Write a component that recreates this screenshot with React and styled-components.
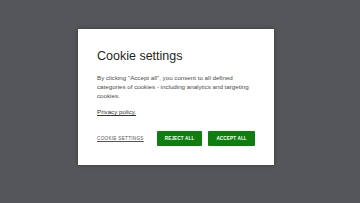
import React from "react";
import styled, { createGlobalStyle } from "styled-components";

const GlobalStyle = createGlobalStyle`
  html, body {
    margin: 0;
    padding: 0;
    width: 100%;
    height: 100%;
    background: #54565a;
    font-family: "Liberation Sans", Arial, sans-serif;
  }
  #root {
    height: 100%;
  }
`;

const Overlay = styled.div`
  width: 100vw;
  height: 100vh;
  display: flex;
  align-items: center;
  justify-content: center;
  padding: 0 8px 9px 0;
  box-sizing: border-box;
  background-color: #54565a;
`;

const Modal = styled.div`
  width: 196px;
  box-sizing: border-box;
  padding: 20px 19px 19px;
  background: #ffffff;
  box-shadow: 0 0 4px rgba(0, 0, 0, 0.35);
  display: flex;
  flex-direction: column;
`;

const Title = styled.h2`
  margin: 0;
  font-size: 12.5px;
  line-height: 15px;
  font-weight: 400;
  color: #1f1f1f;
`;

const Body = styled.p`
  margin: 9px 0 0;
  font-size: 6.2px;
  line-height: 9px;
  color: #4a4a4a;
`;

const PolicyLink = styled.a`
  margin-top: 7px;
  align-self: flex-start;
  font-size: 6.2px;
  line-height: 9px;
  color: #333;
  text-decoration: underline;
`;

const Actions = styled.div`
  margin-top: 15px;
  display: flex;
  align-items: center;
  gap: 6px;
`;

const TextButton = styled.button`
  border: 0;
  background: none;
  padding: 0;
  margin-right: 7px;
  font-family: inherit;
  font-size: 4.7px;
  letter-spacing: 0.25px;
  color: #555;
  text-decoration: underline;
  text-underline-offset: 1px;
`;

const Button = styled.button`
  height: 15px;
  padding: 0 8px;
  border: 0;
  border-radius: 1px;
  background: ${(p) => p.$bg || "#0f7d0f"};
  color: #fff;
  font-family: inherit;
  font-size: 4.6px;
  font-weight: 700;
  letter-spacing: 0.15px;
`;

function App() {
  return (
    <>
      <GlobalStyle />
      <Overlay>
        <Modal>
          <Title>Cookie settings</Title>
          <Body>
            By clicking "Accept all", you consent to all defined categories of
            cookies - including analytics and targeting cookies.
          </Body>
          <PolicyLink href="#">Privacy policy.</PolicyLink>
          <Actions>
            <TextButton>COOKIE SETTINGS</TextButton>
            <Button>REJECT ALL</Button>
            <Button>ACCEPT ALL</Button>
          </Actions>
        </Modal>
      </Overlay>
    </>
  );
}

export default App;
